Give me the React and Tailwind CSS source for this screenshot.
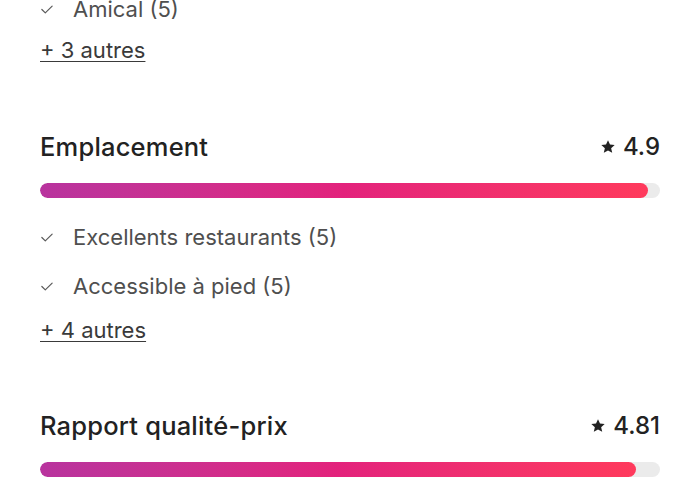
import React from 'react';

const font = { fontFamily: 'Inter, "Noto Sans", sans-serif' };

function Check() {
  return (
    <svg viewBox="0 0 14 10" className="w-[12px] h-[9px] shrink-0 text-[#5a5a5a]" fill="none" stroke="currentColor" strokeWidth={1.4} strokeLinecap="round" strokeLinejoin="round">
      <path d="M1 5l4 4 8-8" />
    </svg>
  );
}

function Star() {
  return (
    <svg viewBox="0 0 24 24" className="w-[16px] h-[16px] fill-[#222]">
      <path d="M12 1.8l3 6.5 7 .7-5.3 4.7 1.6 7L12 17.2l-6.3 3.5 1.6-7L2 9l7-.7z" />
    </svg>
  );
}

function Item({ label, className = '' }) {
  return (
    <div className={`h-[49px] flex items-center gap-[20px] pl-[1px] ${className}`}>
      <Check />
      <span className="text-[22px] text-[#4f4f4f]">{label}</span>
    </div>
  );
}

function More({ label }) {
  return (
    <div className="h-[32px] flex items-center">
      <a href="#" className="text-[22px] text-[#3a3a3a] underline underline-offset-[3px] decoration-[1px]">{label}</a>
    </div>
  );
}

function Heading({ title, score, pct }) {
  return (
    <>
      <div className="h-[40px] flex items-center justify-between">
        <h2 className="text-[25.5px] font-medium text-[#222] tracking-[0.2px]">{title}</h2>
        <div className="flex items-center gap-[7px]">
          <Star />
          <span className="text-[24px] font-medium text-[#222]">{score}</span>
        </div>
      </div>
      <div className="mt-[16px] h-[15px] rounded-full bg-[#ebebeb] overflow-hidden">
        <div
          className="h-full rounded-full bg-gradient-to-r from-[#b8339e] via-[#e3227c] to-[#ff3a5c]"
          style={{ width: pct + '%' }}
        />
      </div>
    </>
  );
}

export default function App() {
  return (
    <div className="w-[700px] h-[500px] overflow-hidden bg-white" style={font}>
      <div className="px-10 flex flex-col">
        <Item label="Amical (5)" className="-mt-[15px]" />
        <More label="+ 3 autres" />

        <div className="mt-[61px]">
          <Heading title="Emplacement" score="4.9" pct={98} />
        </div>
        <div className="mt-[15px]">
          <Item label="Excellents restaurants (5)" />
          <Item label="Accessible à pied (5)" />
        </div>
        <div className="mt-[3px]">
          <More label="+ 4 autres" />
        </div>

        <div className="mt-[60px]">
          <Heading title="Rapport qualité-prix" score="4.81" pct={96.2} />
        </div>
      </div>
    </div>
  );
}
